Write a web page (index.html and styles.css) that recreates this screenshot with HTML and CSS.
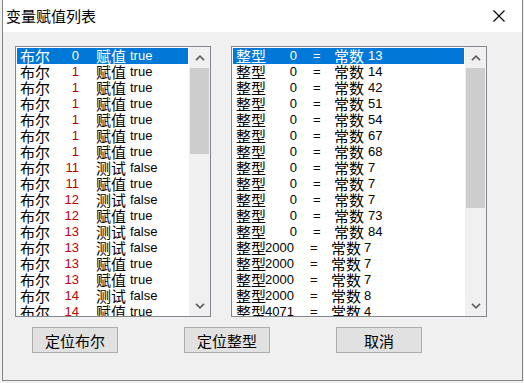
FILE: index.html
```html
<!DOCTYPE html>
<html lang="zh-CN">
<head>
  <meta charset="UTF-8">
  <title>变量赋值列表</title>
  <link rel="stylesheet" href="styles.css">
</head>
<body>
  <div class="window">
    <div class="titlebar">
      <span class="title">变量赋值列表</span>
      <svg class="close" width="12" height="12" viewBox="0 0 12 12">
        <path d="M0.5 0.5 L11.5 11.5 M11.5 0.5 L0.5 11.5" stroke="#000" stroke-width="1.1" fill="none"/>
      </svg>
    </div>

    <div class="client">
      <div class="lists">
        <!-- bool variables -->
        <div class="listbox bool-list">
          <div class="items">
            <div class="row sel"><span class="name cn">布尔</span><span class="num">0</span><span class="kind cn">赋值</span><span class="val">true</span></div>
            <div class="row"><span class="name cn">布尔</span><span class="num">1</span><span class="kind cn">赋值</span><span class="val">true</span></div>
            <div class="row"><span class="name cn">布尔</span><span class="num">1</span><span class="kind cn">赋值</span><span class="val">true</span></div>
            <div class="row"><span class="name cn">布尔</span><span class="num">1</span><span class="kind cn">赋值</span><span class="val">true</span></div>
            <div class="row"><span class="name cn">布尔</span><span class="num">1</span><span class="kind cn">赋值</span><span class="val">true</span></div>
            <div class="row"><span class="name cn">布尔</span><span class="num">1</span><span class="kind cn">赋值</span><span class="val">true</span></div>
            <div class="row"><span class="name cn">布尔</span><span class="num">1</span><span class="kind cn">赋值</span><span class="val">true</span></div>
            <div class="row"><span class="name cn">布尔</span><span class="num">11</span><span class="kind cn">测试</span><span class="val">false</span></div>
            <div class="row"><span class="name cn">布尔</span><span class="num">11</span><span class="kind cn">赋值</span><span class="val">true</span></div>
            <div class="row"><span class="name cn">布尔</span><span class="num">12</span><span class="kind cn">测试</span><span class="val">false</span></div>
            <div class="row"><span class="name cn">布尔</span><span class="num">12</span><span class="kind cn">赋值</span><span class="val">true</span></div>
            <div class="row"><span class="name cn">布尔</span><span class="num">13</span><span class="kind cn">测试</span><span class="val">false</span></div>
            <div class="row"><span class="name cn">布尔</span><span class="num">13</span><span class="kind cn">测试</span><span class="val">false</span></div>
            <div class="row"><span class="name cn">布尔</span><span class="num">13</span><span class="kind cn">赋值</span><span class="val">true</span></div>
            <div class="row"><span class="name cn">布尔</span><span class="num">13</span><span class="kind cn">赋值</span><span class="val">true</span></div>
            <div class="row"><span class="name cn">布尔</span><span class="num">14</span><span class="kind cn">测试</span><span class="val">false</span></div>
            <div class="row"><span class="name cn">布尔</span><span class="num">14</span><span class="kind cn">赋值</span><span class="val">true</span></div>
          </div>
          <div class="scrollbar">
            <div class="sb-btn"><svg width="10" height="6" viewBox="0 0 10 6"><polyline points="1,5.2 5,1.2 9,5.2" /></svg></div>
            <div class="sb-track"><div class="sb-thumb" style="height: 86px"></div></div>
            <div class="sb-btn"><svg width="10" height="6" viewBox="0 0 10 6"><polyline points="1,0.8 5,4.8 9,0.8" /></svg></div>
          </div>
        </div>

        <!-- int variables -->
        <div class="listbox int-list">
          <div class="items">
            <div class="row int sel"><span class="name cn">整型</span><span class="num">0</span><span class="eq">=</span><span class="kind cn">常数</span><span class="val">13</span></div>
            <div class="row int"><span class="name cn">整型</span><span class="num">0</span><span class="eq">=</span><span class="kind cn">常数</span><span class="val">14</span></div>
            <div class="row int"><span class="name cn">整型</span><span class="num">0</span><span class="eq">=</span><span class="kind cn">常数</span><span class="val">42</span></div>
            <div class="row int"><span class="name cn">整型</span><span class="num">0</span><span class="eq">=</span><span class="kind cn">常数</span><span class="val">51</span></div>
            <div class="row int"><span class="name cn">整型</span><span class="num">0</span><span class="eq">=</span><span class="kind cn">常数</span><span class="val">54</span></div>
            <div class="row int"><span class="name cn">整型</span><span class="num">0</span><span class="eq">=</span><span class="kind cn">常数</span><span class="val">67</span></div>
            <div class="row int"><span class="name cn">整型</span><span class="num">0</span><span class="eq">=</span><span class="kind cn">常数</span><span class="val">68</span></div>
            <div class="row int"><span class="name cn">整型</span><span class="num">0</span><span class="eq">=</span><span class="kind cn">常数</span><span class="val">7</span></div>
            <div class="row int"><span class="name cn">整型</span><span class="num">0</span><span class="eq">=</span><span class="kind cn">常数</span><span class="val">7</span></div>
            <div class="row int"><span class="name cn">整型</span><span class="num">0</span><span class="eq">=</span><span class="kind cn">常数</span><span class="val">7</span></div>
            <div class="row int"><span class="name cn">整型</span><span class="num">0</span><span class="eq">=</span><span class="kind cn">常数</span><span class="val">73</span></div>
            <div class="row int"><span class="name cn">整型</span><span class="num">0</span><span class="eq">=</span><span class="kind cn">常数</span><span class="val">84</span></div>
            <div class="row int wide"><span class="name cn">整型</span><span class="num">2000</span><span class="eq">=</span><span class="kind cn">常数</span><span class="val">7</span></div>
            <div class="row int wide"><span class="name cn">整型</span><span class="num">2000</span><span class="eq">=</span><span class="kind cn">常数</span><span class="val">7</span></div>
            <div class="row int wide"><span class="name cn">整型</span><span class="num">2000</span><span class="eq">=</span><span class="kind cn">常数</span><span class="val">7</span></div>
            <div class="row int wide"><span class="name cn">整型</span><span class="num">2000</span><span class="eq">=</span><span class="kind cn">常数</span><span class="val">8</span></div>
            <div class="row int wide"><span class="name cn">整型</span><span class="num">4071</span><span class="eq">=</span><span class="kind cn">常数</span><span class="val">4</span></div>
          </div>
          <div class="scrollbar">
            <div class="sb-btn"><svg width="10" height="6" viewBox="0 0 10 6"><polyline points="1,5.2 5,1.2 9,5.2" /></svg></div>
            <div class="sb-track"><div class="sb-thumb" style="height: 140px"></div></div>
            <div class="sb-btn"><svg width="10" height="6" viewBox="0 0 10 6"><polyline points="1,0.8 5,4.8 9,0.8" /></svg></div>
          </div>
        </div>
      </div>

      <div class="buttons">
        <button class="button">定位布尔</button>
        <button class="button">定位整型</button>
        <button class="button">取消</button>
      </div>
    </div>
  </div>
</body>
</html>
```

FILE: styles.css
```css
body {
  margin: 0;
  background: #f0f0f0;
  font-family: "Liberation Sans", "Noto Sans CJK SC", sans-serif;
  color: #000;
}
.window {
  width: 519px;
  height: 380px;
  margin-left: 2px;
  border: 1px solid #858585;
  border-top: none;
  background: #f0f0f0;
}
.titlebar {
  height: 32px;
  background: #fff;
  display: flex;
  align-items: center;
  justify-content: space-between;
  padding: 0 17px 0 3px;
}
.title {
  font-family: "Noto Sans CJK SC", sans-serif;
  font-size: 15px;
  line-height: 16px;
}
.close {
  display: block;
}
.client {
  padding: 14px 0 0 12px;
}
.lists {
  display: flex;
  gap: 20px;
}
.listbox {
  display: flex;
  height: 269px;
  border: 1px solid #828790;
  background: #fff;
}
.bool-list {
  width: 194px;
}
.int-list {
  width: 254px;
}
.items {
  flex: 1;
  padding: 1px;
  overflow: hidden;
}
.row {
  display: flex;
  height: 16px;
  line-height: 16px;
  padding-left: 3px;
  font-size: 13px;
  white-space: nowrap;
}
.row span {
  flex: none;
}
.cn {
  font-family: "Noto Sans CJK SC", sans-serif;
  font-size: 15px;
}
.row .name {
  width: 30px;
}
.row .num {
  width: 29px;
  text-align: right;
  color: #c00000;
}
.row .kind {
  width: 51px;
  padding-left: 17px;
  box-sizing: border-box;
}
.row.sel {
  background: #0078d7;
  color: #fff;
}
.row.sel .num {
  color: #fff;
}

/* int list columns */
.row.int .num {
  width: 31px;
  color: inherit;
}
.row.int .eq {
  width: 37px;
  padding-left: 16px;
  box-sizing: border-box;
}
.row.int .kind {
  width: 34px;
  padding-left: 0;
}
.row.int.wide .name {
  width: 29px;
}
.row.int.wide .num {
  width: 45px;
  text-align: left;
}
.row.int.wide .eq {
  width: 21px;
  padding-left: 0;
}
.row.int.wide .kind {
  width: 33px;
}

.scrollbar {
  width: 21px;
  flex: none;
  display: flex;
  flex-direction: column;
  background: #f0f0f0;
}
.sb-btn {
  height: 21px;
  display: flex;
  align-items: center;
  justify-content: center;
}
.sb-btn svg {
  display: block;
}
.sb-btn polyline {
  fill: none;
  stroke: #606060;
  stroke-width: 1.7;
}
.sb-track {
  flex: 1;
}
.sb-thumb {
  margin: 0 1px;
  background: #cdcdcd;
}
.buttons {
  display: flex;
  gap: 66px;
  margin-top: 10px;
  padding-left: 17px;
}
.button {
  width: 86px;
  height: 26px;
  padding: 0;
  background: #e1e1e1;
  border: 1px solid #adadad;
  font-family: "Noto Sans CJK SC", sans-serif;
  font-size: 15px;
  color: #000;
}
```
